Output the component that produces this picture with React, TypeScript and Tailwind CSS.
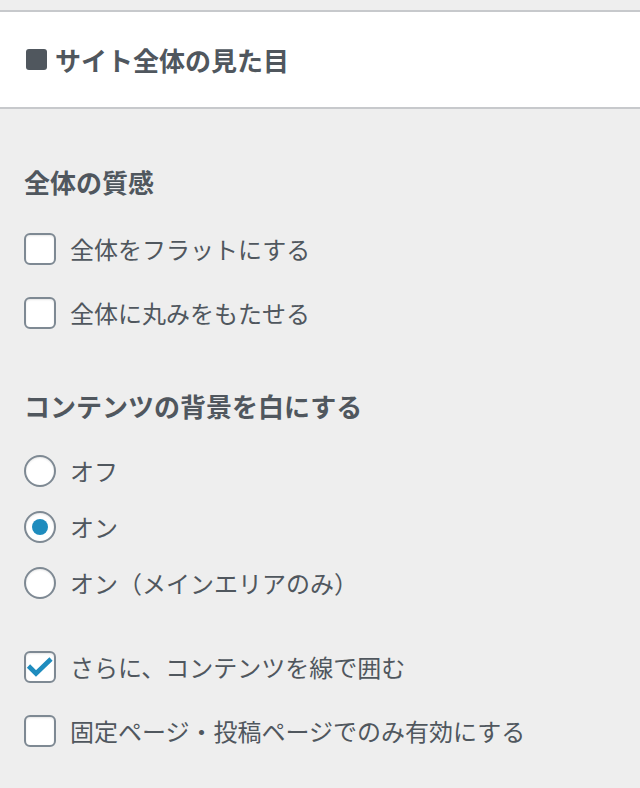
import React from 'react'

const font = { fontFamily: '"Noto Sans CJK JP", "Noto Sans", sans-serif' }

function Checkbox({ checked }: { checked?: boolean }) {
  return (
    <span className="relative inline-flex h-[32px] w-[32px] shrink-0 items-center justify-center rounded-[6px] border-2 border-[#7e8993] bg-white shadow-[inset_0_1px_2px_rgba(0,0,0,0.1)]">
      {checked && (
        <svg width="28" height="28" viewBox="0 0 28 28" className="absolute left-0 top-0">
          <polyline points="2.5,13 10,20.5 25,6" fill="none" stroke="#1e8cbe" strokeWidth="4.6" />
        </svg>
      )}
    </span>
  )
}

function Radio({ checked }: { checked?: boolean }) {
  return (
    <span className="inline-flex h-[32px] w-[32px] shrink-0 items-center justify-center rounded-full border-2 border-[#7e8993] bg-white shadow-[inset_0_1px_2px_rgba(0,0,0,0.1)]">
      {checked && <span className="h-[16px] w-[16px] rounded-full bg-[#1e8cbe]" />}
    </span>
  )
}

function Row({ children, label, className }: { children: React.ReactNode; label: string; className: string }) {
  return (
    <label className={`flex h-[32px] items-center ${className}`}>
      {children}
      <span className="ml-[14px] text-[24px] leading-[32px] text-[#50575e] whitespace-nowrap">{label}</span>
    </label>
  )
}

export default function App() {
  return (
    <div className="min-h-[788px] w-[640px] bg-[#eeeeee]" style={font}>
      <div className="h-[10px]" />
      <div className="flex h-[99px] items-center border-y-2 border-[#c7c9cc] bg-white pl-[26px]">
        <span className="h-[21px] w-[21px] rounded-[3px] bg-[#50575e]" />
        <h2 className="ml-[8px] text-[26px] font-bold leading-[36px] text-[#50575e]">サイト全体の見た目</h2>
      </div>

      <div className="flex flex-col pl-[24px]">
        <h3 className="mt-[55px] h-[36px] text-[26px] font-bold leading-[36px] text-[#50575e]">全体の質感</h3>
        <Row label="全体をフラットにする" className="mt-[33px]">
          <Checkbox />
        </Row>
        <Row label="全体に丸みをもたせる" className="mt-[32px]">
          <Checkbox />
        </Row>

        <h3 className="mt-[59px] h-[36px] text-[26px] font-bold leading-[36px] text-[#50575e]">コンテンツの背景を白にする</h3>
        <Row label="オフ" className="mt-[31px]">
          <Radio />
        </Row>
        <Row label="オン" className="mt-[24px]">
          <Radio checked />
        </Row>
        <Row label="オン（メインエリアのみ）" className="mt-[24px]">
          <Radio />
        </Row>

        <Row label="さらに、コンテンツを線で囲む" className="mt-[52px]">
          <Checkbox checked />
        </Row>
        <Row label="固定ページ・投稿ページでのみ有効にする" className="mt-[32px]">
          <Checkbox />
        </Row>
      </div>
    </div>
  )
}
